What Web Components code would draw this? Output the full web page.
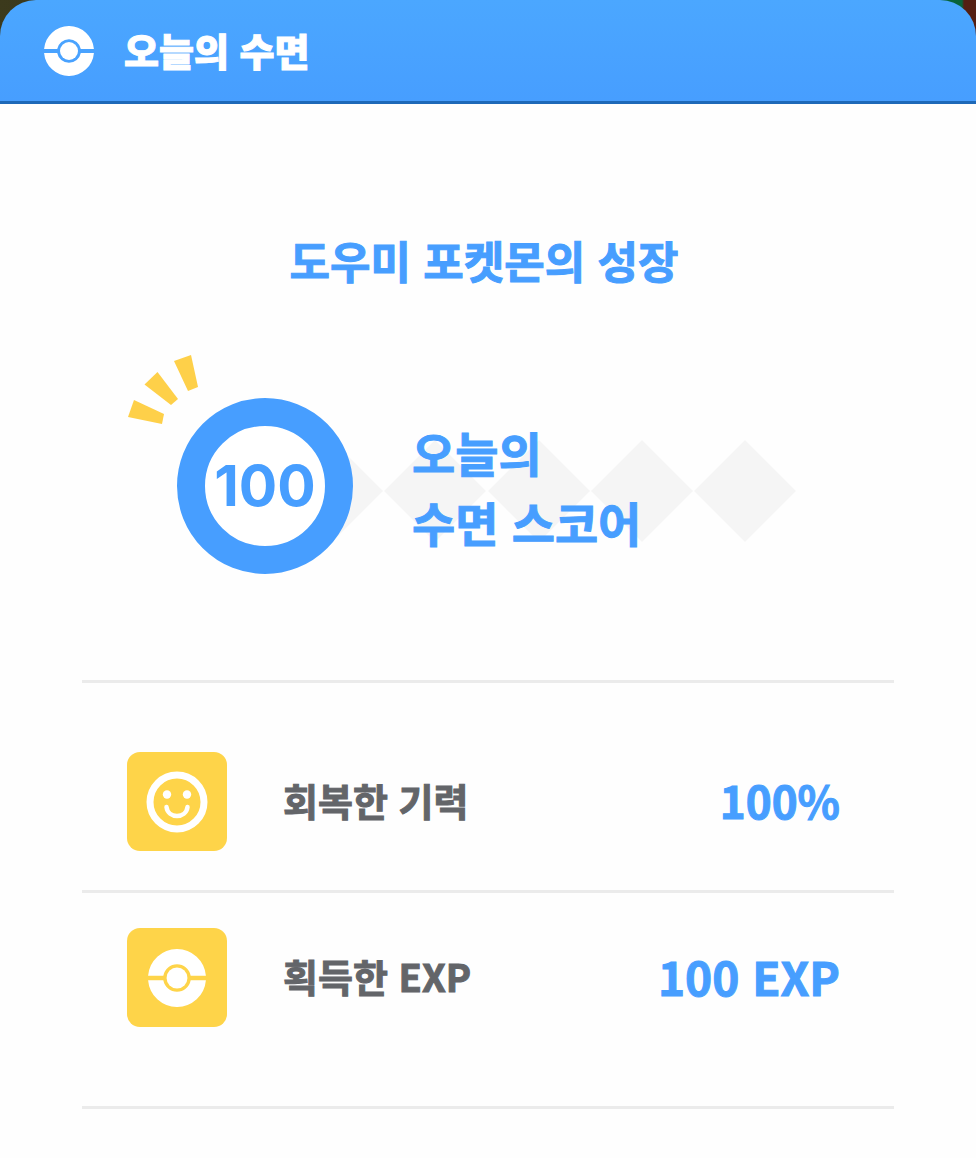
<!DOCTYPE html>
<html lang="ko">
<head>
<meta charset="utf-8">
<meta name="viewport" content="width=device-width, initial-scale=1">
<title>오늘의 수면</title>
<style>
  :root {
    --blue: #479eff;
    --yellow: #fed449;
    --gray: #636569;
    --line: #ebebeb;
  }
  body {
    margin: 0;
    background: #fefefe;
    font-family: "Noto Sans CJK KR", "Noto Sans", sans-serif;
    font-weight: 700;
    color: var(--blue);
  }
</style>
</head>
<body>
<sleep-report></sleep-report>

<script>
const define = (name, html) => {
  const template = document.createElement('template');
  template.innerHTML = html;
  customElements.define(name, class extends HTMLElement {
    constructor() {
      super();
      this.attachShadow({ mode: 'open' }).append(template.content.cloneNode(true));
    }
  });
};

define('ball-icon', `
  <style>
    :host { display: block; color: #fff; }
    svg { display: block; width: 100%; height: 100%; }
  </style>
  <svg viewBox="0 0 50 50" fill="currentColor" aria-hidden="true">
    <path d="M0.080 23A25 25 0 0 1 49.920 23H36.800A12 12 0 0 0 13.200 23Z"/>
    <path d="M0.080 27A25 25 0 0 0 49.920 27H36.800A12 12 0 0 1 13.200 27Z"/>
    <circle cx="25" cy="25" r="9"/>
  </svg>
`);

define('smile-icon', `
  <style>
    :host { display: block; color: #fff; }
    svg { display: block; width: 100%; height: 100%; }
  </style>
  <svg viewBox="0 0 62 62" fill="none" stroke="currentColor" aria-hidden="true">
    <circle cx="31" cy="31" r="27" stroke-width="7"/>
    <g fill="currentColor" stroke="none">
      <circle cx="21" cy="23.500" r="4.200"/>
      <circle cx="41" cy="23.500" r="4.200"/>
    </g>
    <path d="M20.500 36C22 48 40 48 41.500 36" stroke-width="4.500" stroke-linecap="round"/>
  </svg>
`);

define('sheet-header', `
  <style>
    :host {
      display: block;
      background:
        linear-gradient(100deg, #3c3a1c, #2b2610) left / 50% 100% no-repeat,
        linear-gradient(90deg, #08633a calc(100% - 14px), #541f12 calc(100% - 12px)) right / 50% 100% no-repeat;
    }
    header {
      box-sizing: border-box;
      min-height: 104px;
      display: flex;
      align-items: center;
      gap: 30px;
      padding: 0 44px;
      border-radius: 36px 36px 0 0;
      border-bottom: 3px solid #1e69b8;
      background: linear-gradient(#4ba7ff, #479eff);
      color: #fff;
    }
    ball-icon { width: 50px; height: 50px; }
    h1 {
      margin: 0;
      padding-bottom: 2px;
      font-size: 38px;
      line-height: 56px;
      font-weight: 900;
      -webkit-text-stroke: 1px;
    }
  </style>
  <header><ball-icon></ball-icon><h1><slot></slot></h1></header>
`);

define('score-ring', `
  <style>
    :host {
      position: relative;
      box-sizing: border-box;
      display: grid;
      place-items: center;
      width: 176px;
      height: 176px;
      border: 28px solid var(--blue);
      border-radius: 50%;
      background: #fff;
      font: 700 57px/60px Inter, sans-serif;
    }
    svg { position: absolute; left: -77px; top: -71px; width: 72px; height: 72px; }
  </style>
  <svg viewBox="0 0 72 72" fill="#fed049" aria-hidden="true">
    <path d="M46 6L63 0L70 32L60 36Z"/>
    <path d="M16.500 29.500L29.500 17L50 44L43 50Z"/>
    <path d="M6 45L36 59L34 69L0 62Z"/>
  </svg>
  <slot></slot>
`);

define('score-banner', `
  <style>
    :host { display: grid; max-width: 622px; margin: 0 auto; align-items: center; }
    .diamonds, .score { grid-area: 1 / 1; }
    .diamonds { width: 516px; height: 104px; margin: 10px 0 0 104px; fill: #f5f5f5; }
    .score { display: flex; align-items: center; gap: 59px; z-index: 1; }
    p { margin: 0; padding-top: 2px; font-size: 47px; line-height: 70px; -webkit-text-stroke: 1px; }
  </style>
  <svg class="diamonds" viewBox="0 0 516 104" aria-hidden="true">
    <path d="M0 52L51 1L102 52L51 103Z M103 52L154 1L205 52L154 103Z M207 52L258 1L309 52L258 103Z M310 52L361 1L412 52L361 103Z M413 52L464 1L515 52L464 103Z"/>
  </svg>
  <div class="score">
    <score-ring><slot name="score"></slot></score-ring>
    <p><slot></slot></p>
  </div>
`);

define('stat-row', `
  <style>
    :host {
      display: flex;
      align-items: center;
      padding: 35px 54px 39px 45px;
      border-bottom: 3px solid var(--line);
    }
    .tile {
      display: grid;
      place-items: center;
      width: 100px;
      height: 99px;
      margin-right: 56px;
      border-radius: 13px;
      background: var(--yellow);
    }
    .label, .value { padding-bottom: 3px; -webkit-text-stroke: 1px; }
    .label { flex: 1; font-size: 38px; line-height: 56px; color: var(--gray); }
    .value { font-size: 44px; line-height: 64px; }
  </style>
  <div class="tile"><slot name="icon"></slot></div>
  <div class="label"><slot name="label"></slot></div>
  <div class="value"><slot name="value"></slot></div>
`);

define('sleep-report', `
  <style>
    :host { display: block; }
    main { padding: 126px 82px 48px; }
    h2 {
      margin: 0 8px 108px 0;
      text-align: center;
      font-size: 44px;
      line-height: 60px;
      -webkit-text-stroke: 1px;
    }
    .stats { margin-top: 106px; padding-top: 34px; border-top: 3px solid var(--line); }
    .last { padding-bottom: 79px; }
    smile-icon { width: 62px; height: 62px; }
    .stats ball-icon { width: 58px; height: 58px; }
    .wide { font-size: 46px; }
  </style>
  <sheet-header>오늘의 수면</sheet-header>
  <main>
    <h2>도우미 포켓몬의 성장</h2>
    <score-banner><span slot="score">100</span>오늘의<br>수면 스코어</score-banner>
    <section class="stats">
      <stat-row>
        <smile-icon slot="icon"></smile-icon>
        <span slot="label">회복한 기력</span>
        <span slot="value">100%</span>
      </stat-row>
      <stat-row class="last">
        <ball-icon slot="icon"></ball-icon>
        <span slot="label">획득한 EXP</span>
        <span slot="value" class="wide">100 EXP</span>
      </stat-row>
    </section>
  </main>
`);
</script>
</body>
</html>
